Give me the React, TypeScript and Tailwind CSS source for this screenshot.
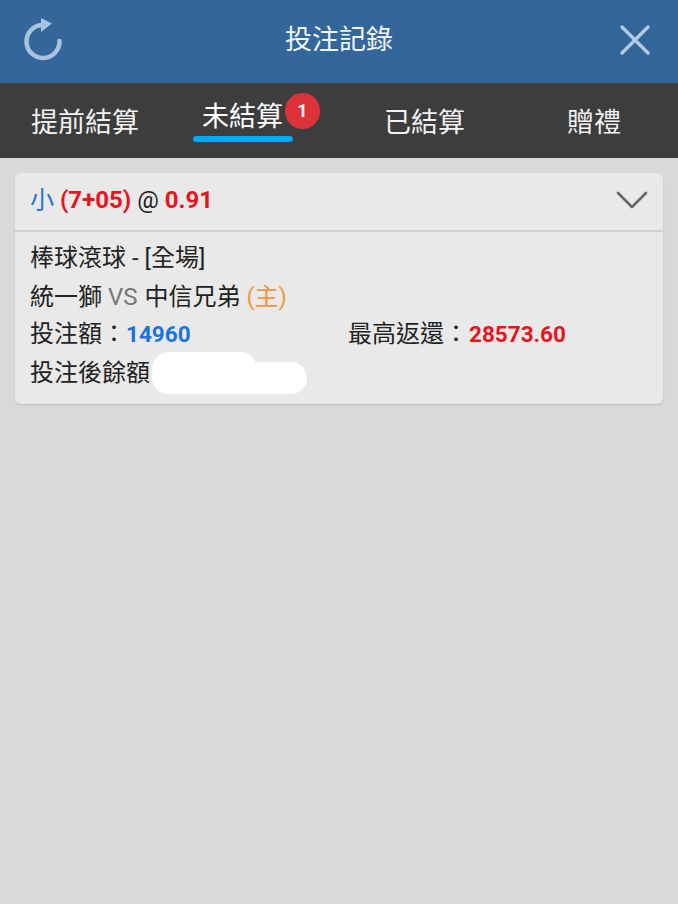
export default function App() {
  return (
    <div className="flex h-[904px] w-[678px] flex-col overflow-hidden bg-[#d9d9d9] font-['Roboto','Noto_Sans_CJK_TC',sans-serif]">
      <header className="flex h-[83px] items-center bg-[#33669b] px-[20px]">
        <div className="flex-1">
          <svg width="44" height="47" viewBox="20 18 44 47" fill="none">
            <path d="M42 25 A16.5 16.5 0 1 0 59.5 41" stroke="#a9c3dc" strokeWidth="4.5" strokeLinecap="round" />
            <path d="M41 18 L52 23.5 L41 32 Z" fill="#a9c3dc" />
          </svg>
        </div>
        <h1 className="pb-[4px] text-[27px] leading-[38px] text-[#f2f5f8]">投注記錄</h1>
        <div className="flex flex-1 justify-end">
          <svg width="32" height="32" viewBox="0 0 32 32" fill="none" className="mb-[3px] mr-[7px]">
            <path d="M3 3 L29 29 M29 3 L3 29" stroke="#b4cbe1" strokeWidth="3.4" strokeLinecap="round" />
          </svg>
        </div>
      </header>

      <nav className="flex h-[75px] items-center gap-[63px] bg-[#3d3d3d] pl-[31px] pt-[5px] text-[27px] leading-[38px] text-[#f2f2f2]">
        <span>提前結算</span>
        <span className="relative mr-[38px] mt-[-12px] text-white">
          未結算
          <span className="absolute left-[-9px] top-[38px] h-[6px] w-[100px] rounded-full bg-[#03a9f4]" />
          <span className="absolute left-[83px] top-[-5px] flex h-[36px] w-[35px] items-center justify-center rounded-full bg-[#dc3338] text-[18px] font-bold text-[#f5f5f5]">
            1
          </span>
        </span>
        <span>已結算</span>
        <span className="ml-[39px]">贈禮</span>
      </nav>

      <main className="p-[15px]">
        <section className="h-[231px] rounded-[6px] bg-[#e9e9e9] shadow-[0_1px_2px_rgba(0,0,0,0.12)]">
          <div className="flex h-[59px] items-center justify-between border-b-2 border-[#cfcfcf] pb-[4px] pl-[15px] pr-[15px]">
            <p className="text-[24px] font-bold text-[#e8141c]">
              <span className="font-normal text-[#1a73d9]">小</span> (7+05) <span className="font-normal text-[#222]">@</span> 0.91
            </p>
            <svg width="32" height="18" viewBox="0 0 32 18" fill="none">
              <path d="M2 2 L16 16 L30 2" stroke="#666" strokeWidth="2.6" strokeLinecap="round" strokeLinejoin="round" />
            </svg>
          </div>
          <div className="flex flex-col px-[15px] pt-[7px] text-[24px] text-[#222]">
            <p className="leading-[38px]">棒球滾球 - [全場]</p>
            <p className="leading-[40px]">
              統一獅 <span className="mr-px text-[#777]">VS</span> 中信兄弟 <span className="text-[#ee9a3a]">(主)</span>
            </p>
            <div className="flex leading-[34px]">
              <p className="w-[318px]">
                投注額：<span className="text-[22.5px] font-bold text-[#1a73e0]">14960</span>
              </p>
              <p>
                最高返還：<span className="ml-px text-[22.5px] font-bold text-[#e8141c]">28573.60</span>
              </p>
            </div>
            <div className="relative leading-[44px]">
              <p>投注後餘額</p>
              <div className="absolute left-[122px] top-[1px] h-[34px] w-[105px] rounded-full bg-white" />
              <div className="absolute left-[122px] top-[11px] h-[32px] w-[155px] rounded-full bg-white" />
            </div>
          </div>
        </section>
      </main>
    </div>
  )
}
